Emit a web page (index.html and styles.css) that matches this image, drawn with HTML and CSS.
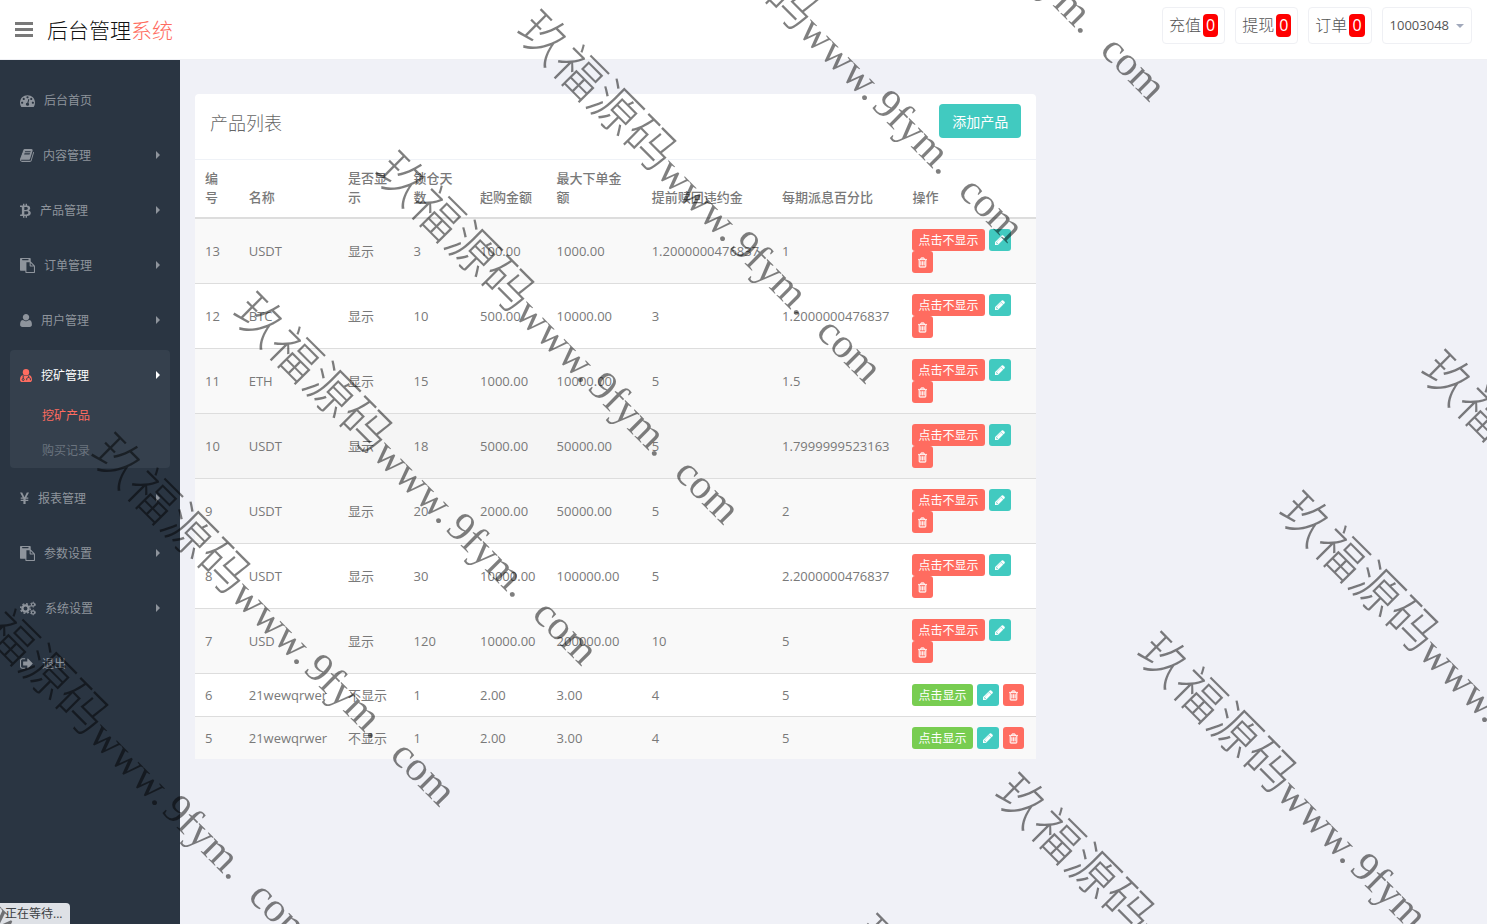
FILE: index.html
```html
<!DOCTYPE html>
<html lang="zh-CN">
<head>
<meta charset="utf-8">
<title>后台管理系统</title>
<link rel="stylesheet" href="styles.css">
</head>
<body>
<svg class="sprite" aria-hidden="true">
  <symbol id="i-dash" viewBox="0 0 1792 1792"><path d="M384 1152q0-53-37.5-90.5t-90.5-37.5-90.5 37.5-37.5 90.5 37.5 90.5 90.5 37.5 90.5-37.5 37.5-90.5zm192-448q0-53-37.5-90.5t-90.5-37.5-90.5 37.5-37.5 90.5 37.5 90.5 90.5 37.5 90.5-37.5 37.5-90.5zm428 481l101-382q6-26-7.5-48.5t-38.5-29.5-48 6.5-30 39.5l-101 382q-60 5-107 43.5t-63 98.5q-20 77 20 146t117 89 146-20 89-117q16-60-6-117t-72-91zm660-33q0-53-37.5-90.5t-90.5-37.5-90.5 37.5-37.5 90.5 37.5 90.5 90.5 37.5 90.5-37.5 37.5-90.5zm-640-640q0-53-37.5-90.5t-90.5-37.5-90.5 37.5-37.5 90.5 37.5 90.5 90.5 37.5 90.5-37.5 37.5-90.5zm448 192q0-53-37.5-90.5t-90.5-37.5-90.5 37.5-37.5 90.5 37.5 90.5 90.5 37.5 90.5-37.5 37.5-90.5zm320 448q0 261-141 483-19 29-54 29h-1402q-35 0-54-29-141-221-141-483 0-182 71-348t191-286 286-191 348-71 348 71 286 191 191 286 71 348z"/></symbol>
  <symbol id="i-book" viewBox="64 0 1664 1792"><path d="M1703 478q40 57 18 129l-275 906q-19 64-76.5 107.5t-122.5 43.5h-923q-77 0-148.5-53.5t-99.5-131.5q-24-67-2-127 0-4 3-27t4-37q1-8-3-21.5t-3-19.5q2-11 8-21t16.500-23.500 16.500-23.500q23-38 45-91.500t30-91.500q3-10 .5-30t-.5-28q3-11 17-28t17-23q21-36 42-92t25-90q1-9-2.500-32t.5-28q4-13 22-30.500t22-22.500q19-26 42.500-84.500t27.500-96.500q1-8-3-25.500t-2-26.500q2-8 9-18t18-23 17-21q8-12 16.500-30.500t15-35 16-36 19.500-32 26.500-23.500 36-11.500 47.500 5.500l-1 3q38-9 51-9h761q74 0 114 56t18 130l-274 906q-36 119-71.500 153.500t-128.500 34.500h-869q-27 0-38 15-11 16-1 43 24 70 144 70h923q29 0 56-15.500t35-41.500l300-987q7-22 5-57 38 15 59 43zm-1064 2q-4 13 2 22.500t20 9.500h608q13 0 25.500-9.500t16.500-22.500l21-64q4-13-2-22.500t-20-9.500h-608q-13 0-25.500 9.500t-16.500 22.500zm-83 256q-4 13 2 22.500t20 9.500h608q13 0 25.500-9.500t16.500-22.500l21-64q4-13-2-22.500t-20-9.500h-608q-13 0-25.500 9.500t-16.500 22.500z"/></symbol>
  <symbol id="i-btc" viewBox="0 0 11 15"><path fill-rule="evenodd" d="M0 2.500h3V.8h1.400v1.700h1.200V.8H7v1.800c2 .2 3.200 1.100 3.200 2.600 0 1.100-.6 1.800-1.600 2.200 1.400.3 2.200 1.200 2.200 2.600 0 2-1.500 2.900-3.800 3v1.800H5.600V13H4.400v1.800H3V13H0l.3-1.500h1.100c.3 0 .5-.2.500-.5V4.700c0-.4-.2-.6-.6-.6H0zm4.300 1.600v2.800h1.500c1.200 0 2-.4 2-1.400s-.8-1.400-2-1.400zm0 4.200v3.100h1.900c1.300 0 2.100-.5 2.100-1.600s-.8-1.500-2.200-1.500z"/></symbol>
  <symbol id="i-paste" viewBox="0 0 1792 1792"><path d="M768 1664h896v-640h-416q-40 0-68-28t-28-68v-416h-384v1152zm256-1440v-64q0-13-9.500-22.500t-22.500-9.500h-704q-13 0-22.500 9.500t-9.500 22.500v64q0 13 9.500 22.500t22.500 9.500h704q13 0 22.500-9.500t9.500-22.500zm256 672h299l-299-299v299zm512 128v672q0 40-28 68t-68 28h-960q-40 0-68-28t-28-68v-160h-544q-40 0-68-28t-28-68v-1344q0-40 28-68t68-28h1088q40 0 68 28t28 68v328q21 13 36 28l408 408q28 28 48 76t20 88z"/></symbol>
  <symbol id="i-user" viewBox="192 0 1408 1792"><path d="M1600 1405q0 120-73 189.500t-194 69.500h-874q-121 0-194-69.500t-73-189.500q0-53 3.500-103.500t14-109 26.500-108.500 43-97.500 62-81 85.500-53.500 111.500-20q9 0 42 21.500t74.500 48 108 48 133.500 21.500 133.500-21.500 108-48 74.500-48 42-21.500q61 0 111.500 20t85.500 53.500 62 81 43 97.500 26.500 108.500 14 109 3.500 103.500zm-320-893q0 159-112.500 271.500t-271.500 112.500-271.500-112.500-112.500-271.500 112.500-271.500 271.500-112.500 271.500 112.500 112.500 271.500z"/></symbol>
  <symbol id="i-doctor" viewBox="0 0 12 15"><circle cx="6" cy="4.200" r="3.200"/><path d="M3.100 6.900C1 7 0 8.900 0 11.700 0 13.200.9 14 2.200 14h7.600c1.300 0 2.200-.8 2.200-2.300C12 8.900 11 7 8.900 6.900 7.200 8.300 4.800 8.300 3.100 6.900z"/><path class="cutout" d="M3.200 7.300v3.200M8.700 7.500v2M6.700 12.200v-1.100c0-2.100 3.700-2.100 3.700 0v1.100"/><circle class="cutout" cx="3.200" cy="11.500" r="1"/></symbol>
  <symbol id="i-yen" viewBox="0 0 9 15"><path d="M0 1.500h2.200l2.300 4.700 2.300-4.700H9L6.300 6.600h2v1.200H5.600v1h2.700V10H5.600v3H3.400v-3H.7V8.800h2.700v-1H.7V6.600h2z"/></symbol>
  <symbol id="i-cogs" viewBox="0 0 16 15"><g fill="none" stroke="currentColor"><circle cx="5.500" cy="7.500" r="3.100" stroke-width="2.300"/><circle cx="5.500" cy="7.500" r="4.800" stroke-width="1.500" stroke-dasharray="1.900 1.870"/><circle cx="13" cy="3.600" r="1.600" stroke-width="1.200"/><circle cx="13" cy="3.600" r="2.400" stroke-width="1" stroke-dasharray="1.250 1.260"/><circle cx="13" cy="11.400" r="1.600" stroke-width="1.200"/><circle cx="13" cy="11.400" r="2.400" stroke-width="1" stroke-dasharray="1.250 1.260"/></g></symbol>
  <symbol id="i-out" viewBox="64 0 1600 1792"><path d="M704 1440q0 4 1 20t.5 26.500-3 23.500-10 19.500-20.500 6.500h-320q-119 0-203.500-84.500t-84.500-203.500v-704q0-119 84.500-203.500t203.500-84.500h320q13 0 22.500 9.500t9.500 22.500q0 4 1 20t.5 26.500-3 23.500-10 19.500-20.500 6.500h-320q-66 0-113 47t-47 113v704q0 66 47 113t113 47h312l11.500 1 11.500 3 8 5.500 7 9 2 13.500zm928-544q0 26-19 45l-544 544q-19 19-45 19t-45-19-19-45v-288h-448q-26 0-45-19t-19-45v-384q0-26 19-45t45-19h448v-288q0-26 19-45t45-19 45 19l544 544q19 19 19 45z"/></symbol>
  <symbol id="i-pencil" viewBox="128 128 1536 1536"><path d="M491 1536l91-91-235-235-91 91v107h128v128h107zm523-928q0-22-22-22-10 0-17 7l-542 542q-7 7-7 17 0 22 22 22 10 0 17-7l542-542q7-7 7-17zm-54-192l416 416-832 832h-416v-416zm683 96q0 53-37 90l-166 166-416-416 166-165q36-38 90-38 53 0 91 38l235 234q37 39 37 91z"/></symbol>
  <symbol id="i-trash" viewBox="192 128 1408 1536"><path d="M704 736v576q0 14-9 23t-23 9h-64q-14 0-23-9t-9-23v-576q0-14 9-23t23-9h64q14 0 23 9t9 23zm256 0v576q0 14-9 23t-23 9h-64q-14 0-23-9t-9-23v-576q0-14 9-23t23-9h64q14 0 23 9t9 23zm256 0v576q0 14-9 23t-23 9h-64q-14 0-23-9t-9-23v-576q0-14 9-23t23-9h64q14 0 23 9t9 23zm128 724v-948h-896v948q0 22 7 40.500t14.500 27 10.500 8.500h832q3 0 10.500-8.500t14.500-27 7-40.500zm-672-1076h448l-48-117q-7-9-17-11h-317q-10 2-17 11zm928 32v64q0 14-9 23t-23 9h-96v948q0 83-47 143.500t-113 60.500h-832q-66 0-113-58.500t-47-141.500v-952h-96q-14 0-23-9t-9-23v-64q0-14 9-23t23-9h309l70-167q15-37 54-63t79-26h320q40 0 79 26t54 63l70 167h309q14 0 23 9t9 23z"/></symbol>
</svg>

<header class="topbar">
  <button class="toggle" type="button" aria-label="切换菜单"><span></span><span></span><span></span></button>
  <a class="logo" href="#">后台管理<span>系统</span></a>
  <nav class="top-actions">
    <a class="top-link" href="#">充值<span class="count">0</span></a>
    <a class="top-link" href="#">提现<span class="count">0</span></a>
    <a class="top-link" href="#">订单<span class="count">0</span></a>
    <button class="account" type="button">10003048<span class="caret"></span></button>
  </nav>
</header>

<div class="shell">
  <aside class="sidebar">
    <ul class="menu">
      <li><a href="#"><svg class="w15"><use href="#i-dash"/></svg>后台首页</a></li>
      <li><a class="more" href="#"><svg class="w14"><use href="#i-book"/></svg>内容管理</a></li>
      <li><a class="more" href="#"><svg class="w11"><use href="#i-btc"/></svg>产品管理</a></li>
      <li><a class="more" href="#"><svg class="w15"><use href="#i-paste"/></svg>订单管理</a></li>
      <li><a class="more" href="#"><svg class="w12"><use href="#i-user"/></svg>用户管理</a></li>
      <li class="open"><a class="more" href="#"><svg class="w12"><use href="#i-doctor"/></svg>挖矿管理</a>
        <ul class="submenu">
          <li><a class="current" href="#">挖矿产品</a></li>
          <li><a href="#">购买记录</a></li>
        </ul>
      </li>
      <li><a class="more" href="#"><svg class="w9"><use href="#i-yen"/></svg>报表管理</a></li>
      <li><a class="more" href="#"><svg class="w15"><use href="#i-paste"/></svg>参数设置</a></li>
      <li><a class="more" href="#"><svg class="w16"><use href="#i-cogs"/></svg>系统设置</a></li>
      <li><a href="#"><svg class="w13"><use href="#i-out"/></svg>退出</a></li>
    </ul>
  </aside>

  <main class="content">
    <section class="panel">
      <div class="panel-head"><h1>产品列表</h1><button class="add" type="button">添加产品</button></div>
      <table class="products">
        <colgroup><col class="c-id"><col class="c-name"><col class="c-show"><col class="c-days"><col class="c-min"><col class="c-max"><col class="c-fee"><col class="c-rate"><col class="c-ops"></colgroup>
        <thead><tr><th>编号</th><th>名称</th><th>是否显示</th><th>锁仓天数</th><th>起购金额</th><th>最大下单金额</th><th>提前赎回违约金</th><th>每期派息百分比</th><th>操作</th></tr></thead>
        <tbody>
          <tr><td>13</td><td>USDT</td><td>显示</td><td>3</td><td>100.00</td><td>1000.00</td><td>1.2000000476837</td><td>1</td><td><div class="ops"><button class="btn red" type="button">点击不显示</button><button class="btn teal" type="button" aria-label="编辑"><svg><use href="#i-pencil"/></svg></button><button class="btn red del" type="button" aria-label="删除"><svg><use href="#i-trash"/></svg></button></div></td></tr>
          <tr><td>12</td><td>BTC</td><td>显示</td><td>10</td><td>500.00</td><td>10000.00</td><td>3</td><td>1.2000000476837</td><td><div class="ops"><button class="btn red" type="button">点击不显示</button><button class="btn teal" type="button" aria-label="编辑"><svg><use href="#i-pencil"/></svg></button><button class="btn red del" type="button" aria-label="删除"><svg><use href="#i-trash"/></svg></button></div></td></tr>
          <tr><td>11</td><td>ETH</td><td>显示</td><td>15</td><td>1000.00</td><td>10000.00</td><td>5</td><td>1.5</td><td><div class="ops"><button class="btn red" type="button">点击不显示</button><button class="btn teal" type="button" aria-label="编辑"><svg><use href="#i-pencil"/></svg></button><button class="btn red del" type="button" aria-label="删除"><svg><use href="#i-trash"/></svg></button></div></td></tr>
          <tr class="active"><td>10</td><td>USDT</td><td>显示</td><td>18</td><td>5000.00</td><td>50000.00</td><td>5</td><td>1.7999999523163</td><td><div class="ops"><button class="btn red" type="button">点击不显示</button><button class="btn teal" type="button" aria-label="编辑"><svg><use href="#i-pencil"/></svg></button><button class="btn red del" type="button" aria-label="删除"><svg><use href="#i-trash"/></svg></button></div></td></tr>
          <tr><td>9</td><td>USDT</td><td>显示</td><td>20</td><td>2000.00</td><td>50000.00</td><td>5</td><td>2</td><td><div class="ops"><button class="btn red" type="button">点击不显示</button><button class="btn teal" type="button" aria-label="编辑"><svg><use href="#i-pencil"/></svg></button><button class="btn red del" type="button" aria-label="删除"><svg><use href="#i-trash"/></svg></button></div></td></tr>
          <tr><td>8</td><td>USDT</td><td>显示</td><td>30</td><td>10000.00</td><td>100000.00</td><td>5</td><td>2.2000000476837</td><td><div class="ops"><button class="btn red" type="button">点击不显示</button><button class="btn teal" type="button" aria-label="编辑"><svg><use href="#i-pencil"/></svg></button><button class="btn red del" type="button" aria-label="删除"><svg><use href="#i-trash"/></svg></button></div></td></tr>
          <tr><td>7</td><td>USD</td><td>显示</td><td>120</td><td>10000.00</td><td>200000.00</td><td>10</td><td>5</td><td><div class="ops"><button class="btn red" type="button">点击不显示</button><button class="btn teal" type="button" aria-label="编辑"><svg><use href="#i-pencil"/></svg></button><button class="btn red del" type="button" aria-label="删除"><svg><use href="#i-trash"/></svg></button></div></td></tr>
          <tr><td>6</td><td>21wewqrwer</td><td>不显示</td><td>1</td><td>2.00</td><td>3.00</td><td>4</td><td>5</td><td><div class="ops"><button class="btn green" type="button">点击显示</button><button class="btn teal" type="button" aria-label="编辑"><svg><use href="#i-pencil"/></svg></button><button class="btn red del" type="button" aria-label="删除"><svg><use href="#i-trash"/></svg></button></div></td></tr>
          <tr><td>5</td><td>21wewqrwer</td><td>不显示</td><td>1</td><td>2.00</td><td>3.00</td><td>4</td><td>5</td><td><div class="ops"><button class="btn green" type="button">点击显示</button><button class="btn teal" type="button" aria-label="编辑"><svg><use href="#i-pencil"/></svg></button><button class="btn red del" type="button" aria-label="删除"><svg><use href="#i-trash"/></svg></button></div></td></tr>
        </tbody>
      </table>
    </section>
  </main>
</div>

<div class="status">正在等待...</div>

<svg class="watermark" aria-hidden="true">
  <text transform="translate(811 -263) rotate(45)" y="19">玖福源码<tspan>www.</tspan><tspan x="304">9fym.</tspan><tspan x="426">com</tspan></text>
  <text transform="translate(669 -122) rotate(45)" y="19">玖福源码<tspan>www.</tspan><tspan x="304">9fym.</tspan><tspan x="426">com</tspan></text>
  <text transform="translate(527 19) rotate(45)" y="19">玖福源码<tspan>www.</tspan><tspan x="304">9fym.</tspan><tspan x="426">com</tspan></text>
  <text transform="translate(385 160) rotate(45)" y="19">玖福源码<tspan>www.</tspan><tspan x="304">9fym.</tspan><tspan x="426">com</tspan></text>
  <text transform="translate(243 301) rotate(45)" y="19">玖福源码<tspan>www.</tspan><tspan x="304">9fym.</tspan><tspan x="426">com</tspan></text>
  <text transform="translate(101 442) rotate(45)" y="19">玖福源码<tspan>www.</tspan><tspan x="304">9fym.</tspan><tspan x="426">com</tspan></text>
  <text transform="translate(-41 583) rotate(45)" y="19">玖福源码<tspan>www.</tspan><tspan x="304">9fym.</tspan><tspan x="426">com</tspan></text>
  <text transform="translate(-183 724) rotate(45)" y="19">玖福源码<tspan>www.</tspan><tspan x="304">9fym.</tspan><tspan x="426">com</tspan></text>
  <text transform="translate(1431 359) rotate(45)" y="19">玖福源码<tspan>www.</tspan><tspan x="304">9fym.</tspan><tspan x="426">com</tspan></text>
  <text transform="translate(1289 500) rotate(45)" y="19">玖福源码<tspan>www.</tspan><tspan x="304">9fym.</tspan><tspan x="426">com</tspan></text>
  <text transform="translate(1147 641) rotate(45)" y="19">玖福源码<tspan>www.</tspan><tspan x="304">9fym.</tspan><tspan x="426">com</tspan></text>
  <text transform="translate(1005 782) rotate(45)" y="19">玖福源码<tspan>www.</tspan><tspan x="304">9fym.</tspan><tspan x="426">com</tspan></text>
  <text transform="translate(863 923) rotate(45)" y="19">玖福源码<tspan>www.</tspan><tspan x="304">9fym.</tspan><tspan x="426">com</tspan></text>
</svg>
</body>
</html>
```
FILE: styles.css
```css
* { box-sizing: border-box; }
body {
  margin: 0;
  min-height: 100vh;
  display: flex;
  flex-direction: column;
  background: #f0f1f7;
  color: #797979;
  font: 13px/19px "Open Sans", "Noto Sans CJK SC", sans-serif;
}
a { color: inherit; text-decoration: none; }
button { font: inherit; border: 0; cursor: pointer; }
ul { list-style: none; margin: 0; padding: 0; }
svg { fill: currentColor; flex: none; }
.sprite { position: absolute; width: 0; height: 0; }

.topbar {
  display: flex;
  align-items: center;
  height: 60px;
  padding: 0 15px;
  background: #fff;
  border-bottom: 1px solid #eff0f4;
}
.toggle {
  display: flex;
  flex-direction: column;
  gap: 3px;
  width: 18px;
  padding: 0;
  background: none;
}
.toggle span { height: 3px; background: #797979; }
.logo {
  margin-left: 14px;
  font-size: 21px;
  line-height: 30px;
  font-weight: 300;
  color: #111;
}
.logo span { color: #ff6c60; }
.top-actions { display: flex; gap: 10px; margin-left: auto; align-self: flex-start; padding-top: 7px; }
.top-link, .account {
  display: flex;
  align-items: center;
  height: 37px;
  padding: 0 6px;
  border: 1px solid #eff0f4;
  border-radius: 4px;
  background: #fff;
  color: #555;
}
.top-link { gap: 2px; font-size: 16px; font-weight: 300; }
.count {
  padding: 0 3px;
  border-radius: 4px;
  background: #f00;
  color: #fff;
  line-height: 23px;
  font-weight: 400;
}
.account { gap: 7px; padding: 0 7px; }
.caret { border: 4px solid transparent; border-top-color: #a1a9bb; border-bottom: 0; }

.shell { display: flex; flex: 1; }
.sidebar { flex: none; width: 180px; padding: 15px 10px; background: #2a3542; }
.menu { display: flex; flex-direction: column; gap: 5px; font-size: 12px; color: #8e949c; }
.menu a { display: flex; align-items: center; }
.menu > li > a { gap: 9px; height: 50px; padding: 0 10px; }
.menu svg { height: 15px; }
.w9 { width: 9px; }
.w11 { width: 11px; }
.w12 { width: 12px; }
.w13 { width: 13px; }
.w14 { width: 14px; }
.w15 { width: 15px; }
.w16 { width: 16px; }
.more::after {
  content: "";
  margin-left: auto;
  border: 4px solid transparent;
  border-left-color: currentColor;
  border-right: 0;
}
.open { border-radius: 4px; background: #35404d; }
.open > a { color: #fff; }
.open > a svg { color: #ff6c60; }
.cutout { fill: none; stroke: #35404d; stroke-width: 1; }
.submenu { display: flex; flex-direction: column; gap: 5px; padding-bottom: 3px; color: #6b747f; }
.submenu a { height: 30px; padding-left: 32px; }
.submenu .current { color: #ff6c60; }

.content { flex: 1; min-width: 0; padding: 34px 15px; }
/* two thirds of the full content width, less the two gutters */
.panel { width: calc((100% + 30px) * 2 / 3 - 30px); border-radius: 4px 4px 0 0; background: #fff; }
.panel-head {
  display: flex;
  justify-content: space-between;
  align-items: flex-start;
  min-height: 66px;
  padding: 10px 15px;
  border-bottom: 1px solid #eff2f7;
}
.panel-head h1 { margin: 5px 0; font-size: 18px; line-height: 28px; font-weight: 300; color: #666; }
.add {
  height: 34px;
  padding: 0 13px;
  border-radius: 4px;
  background: #41cac0;
  color: #fff;
  font-size: 14px;
}
.products { width: 100%; table-layout: fixed; border-collapse: separate; border-spacing: 0; }
.c-id { width: 5.2%; }
.c-name { width: 11.8%; }
.c-show { width: 7.8%; }
.c-days { width: 7.9%; }
.c-min { width: 9.1%; }
.c-max { width: 11.3%; }
.c-fee, .c-rate { width: 15.5%; }
.c-ops { width: 15.9%; }
.products th {
  padding: 9px 10px 10px;
  border-bottom: 2px solid #ddd;
  text-align: left;
  vertical-align: bottom;
  font-weight: 500;
}
.products td { padding: 10px; border-bottom: 1px solid #ddd; vertical-align: middle; white-space: nowrap; }
.products tr:last-child td { border-bottom: 0; }
.products tbody tr:nth-child(odd) { background: #f9f9f9; }
.products tbody .active { background: #f5f5f5; }
.ops { display: flex; flex-wrap: wrap; gap: 0 4px; }
.btn {
  display: flex;
  align-items: center;
  justify-content: center;
  height: 22px;
  padding: 0 6px;
  border-radius: 3px;
  color: #fff;
  font-size: 12px;
}
.btn svg { width: 10px; height: 10px; stroke: currentColor; stroke-width: 40; }
.del svg { width: 9px; height: 11px; }
.red { background: #ff6c60; }
.teal { background: #41cac0; }
.green { background: #78cd51; }

.status {
  position: fixed;
  left: 0;
  bottom: 0;
  padding: 1px 8px 1px 5px;
  border-radius: 0 4px 0 0;
  background: #dee1e6;
  color: #3c4043;
  font-size: 12px;
}
.watermark {
  position: fixed;
  inset: 0;
  width: 100%;
  height: 100%;
  overflow: hidden;
  pointer-events: none;
  fill: #000;
  opacity: 0.5;
  font: 300 50px "Noto Sans CJK SC", sans-serif;
}
.watermark tspan { font: 400 42px "Liberation Serif", serif; }
```
